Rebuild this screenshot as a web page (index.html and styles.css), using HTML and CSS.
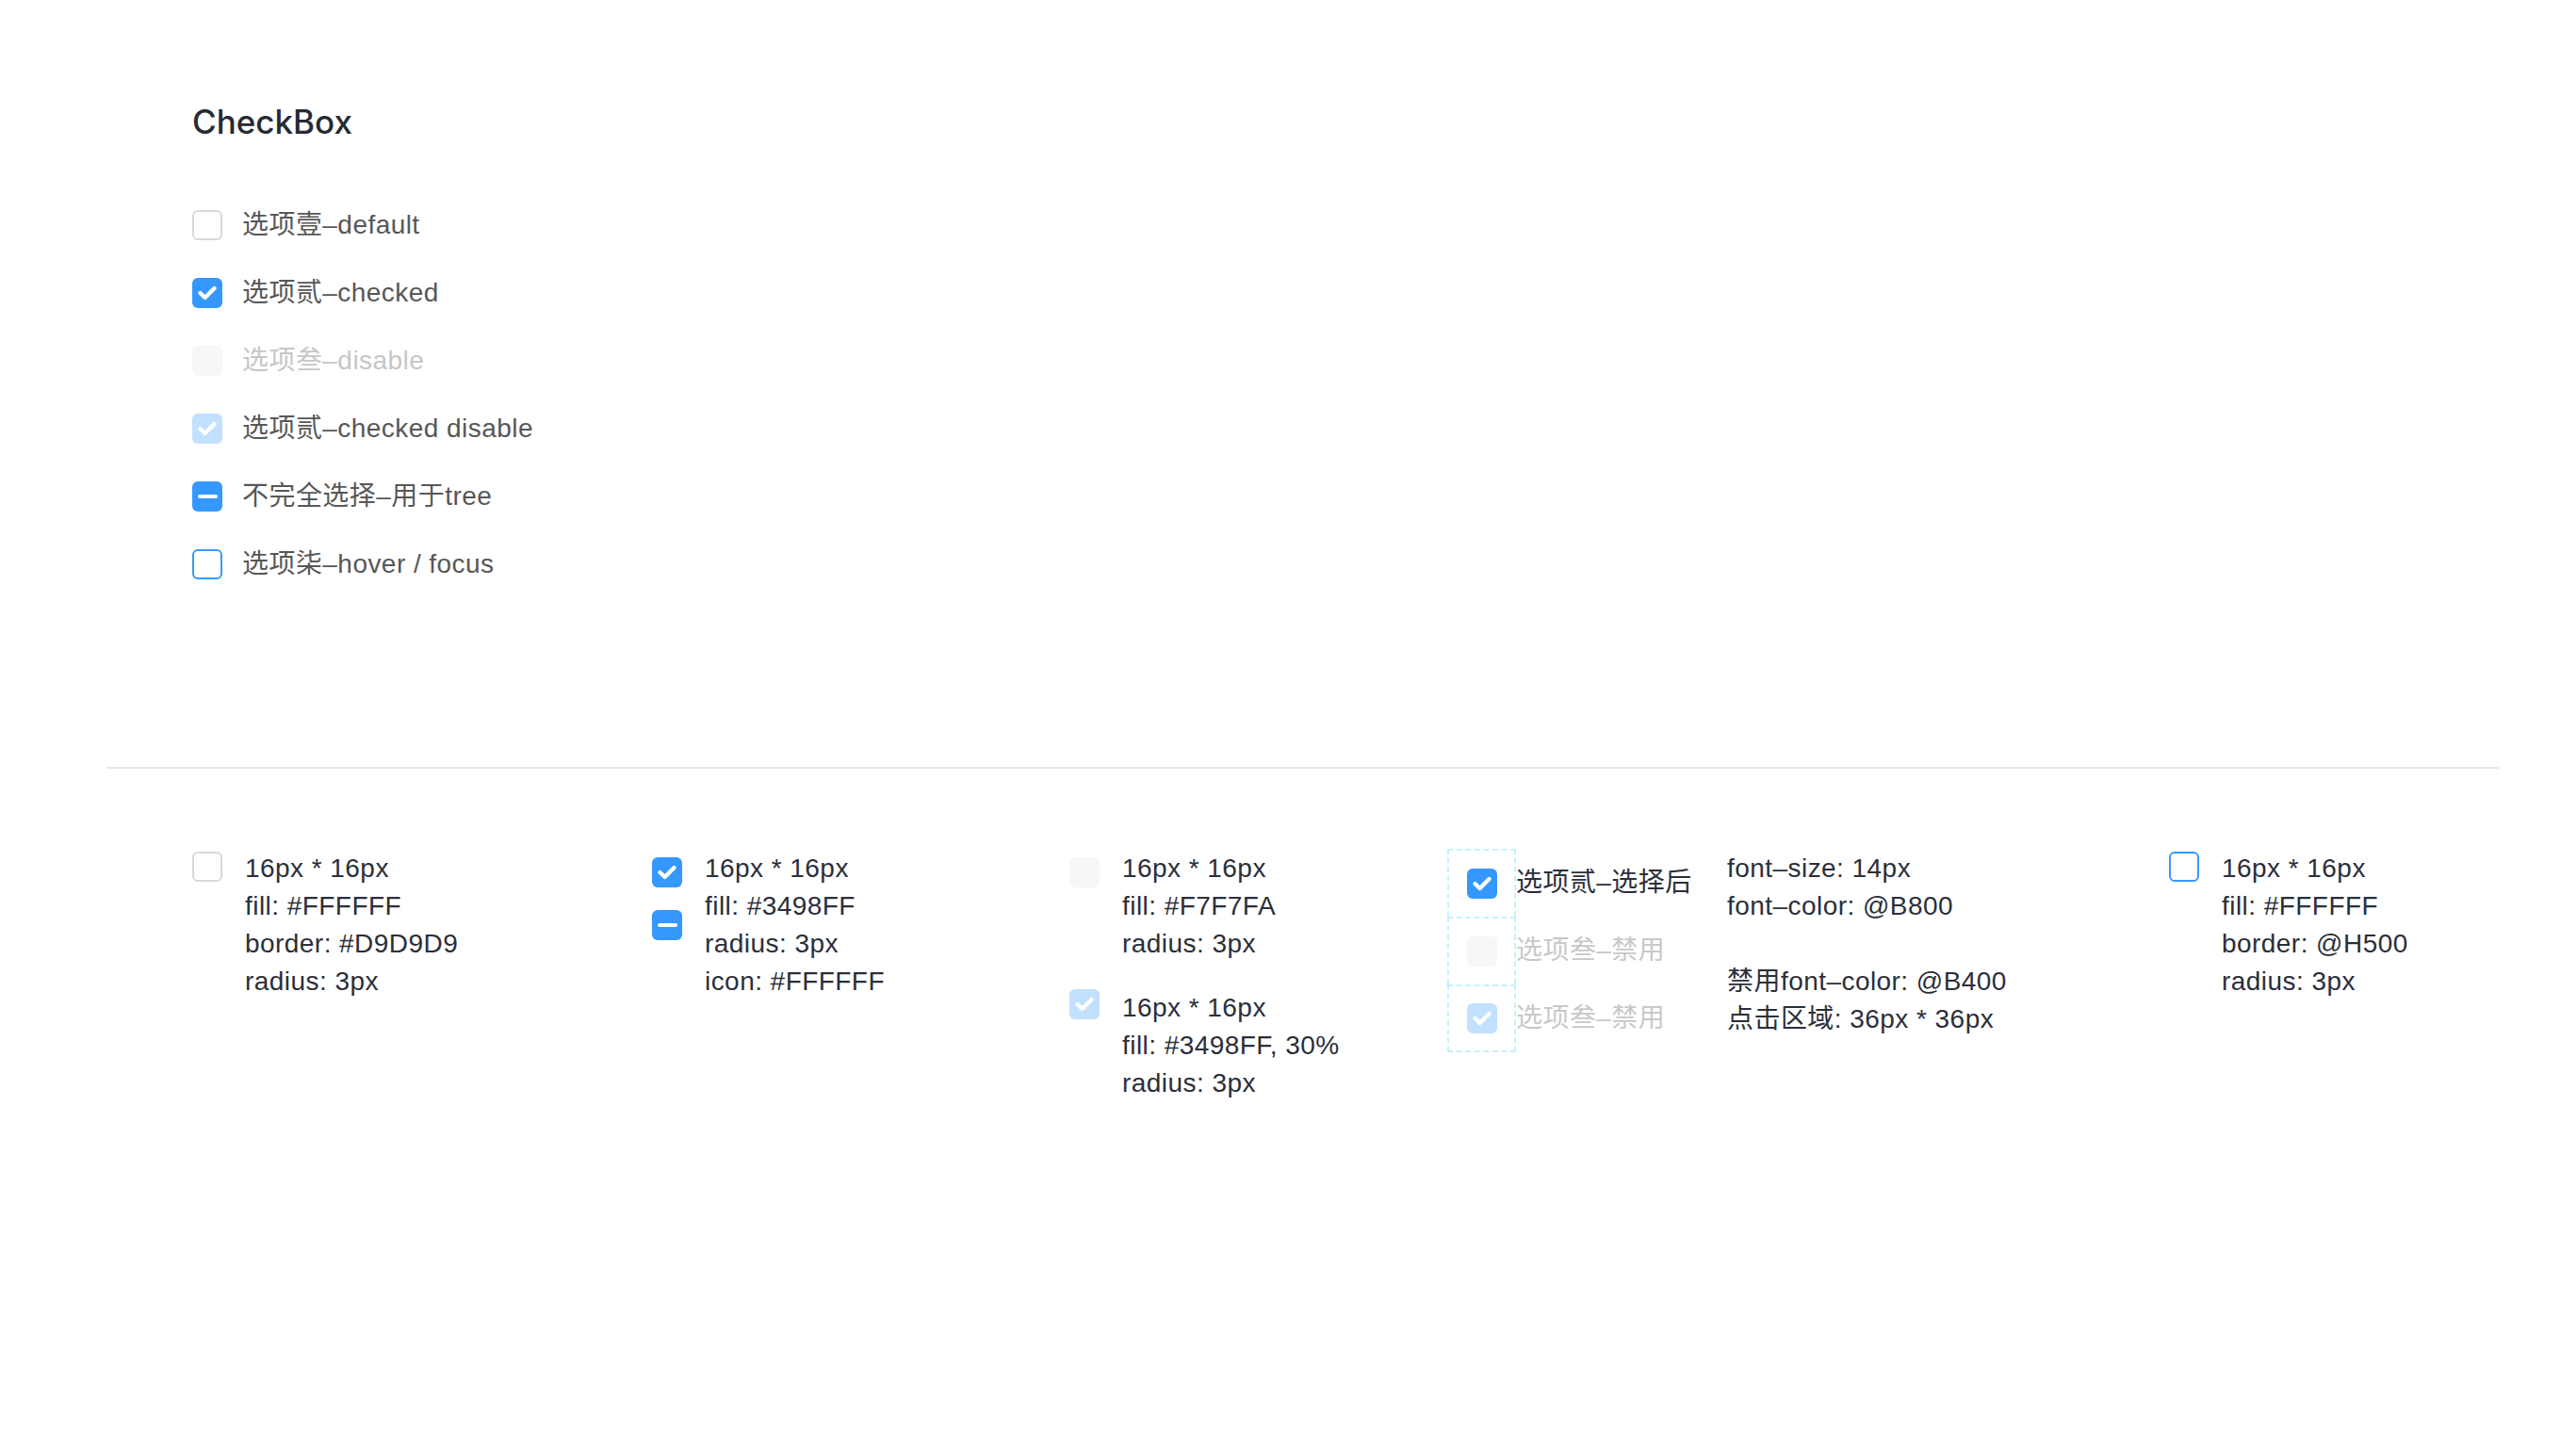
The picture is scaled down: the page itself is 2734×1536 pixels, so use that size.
FILE: index.html
```html
<!DOCTYPE html>
<html lang="zh-CN">
<head>
<meta charset="utf-8">
<title>CheckBox</title>
<link rel="stylesheet" href="styles.css">
</head>
<body>
<div class="page">
  <section class="demo">
    <h1 class="title">CheckBox</h1>
    <ul class="options">
      <li class="option"><span class="cb"></span><span class="label">选项壹–default</span></li>
      <li class="option"><span class="cb cb-checked"><svg viewBox="0 0 32 32"><path d="M8.5 16 L13.6 21 L23.5 11"/></svg></span><span class="label">选项贰–checked</span></li>
      <li class="option"><span class="cb cb-disabled"></span><span class="label label-disabled">选项叁–disable</span></li>
      <li class="option"><span class="cb cb-checked-disabled"><svg viewBox="0 0 32 32"><path d="M8.5 16 L13.6 21 L23.5 11"/></svg></span><span class="label">选项贰–checked disable</span></li>
      <li class="option"><span class="cb cb-checked"><i class="minus"></i></span><span class="label">不完全选择–用于tree</span></li>
      <li class="option"><span class="cb cb-hover"></span><span class="label">选项柒–hover / focus</span></li>
    </ul>
  </section>

  <hr class="divider">

  <section class="specs">
    <div class="spec">
      <div class="boxes boxes-high"><span class="cb"></span></div>
      <div class="spec-text">
        <p>16px * 16px</p>
        <p>fill: #FFFFFF</p>
        <p>border: #D9D9D9</p>
        <p>radius: 3px</p>
      </div>
    </div>

    <div class="spec">
      <div class="boxes boxes-low">
        <span class="cb cb-checked"><svg viewBox="0 0 32 32"><path d="M8.5 16 L13.6 21 L23.5 11"/></svg></span>
        <span class="cb cb-checked"><i class="minus"></i></span>
      </div>
      <div class="spec-text">
        <p>16px * 16px</p>
        <p>fill: #3498FF</p>
        <p>radius: 3px</p>
        <p>icon: #FFFFFF</p>
      </div>
    </div>

    <div class="spec-stack">
      <div class="spec">
        <div class="boxes boxes-low"><span class="cb cb-disabled"></span></div>
        <div class="spec-text">
          <p>16px * 16px</p>
          <p>fill: #F7F7FA</p>
          <p>radius: 3px</p>
        </div>
      </div>
      <div class="spec">
        <div class="boxes"><span class="cb cb-checked-disabled"><svg viewBox="0 0 32 32"><path d="M8.5 16 L13.6 21 L23.5 11"/></svg></span></div>
        <div class="spec-text">
          <p>16px * 16px</p>
          <p>fill: #3498FF, 30%</p>
          <p>radius: 3px</p>
        </div>
      </div>
    </div>

    <div class="hit-demo">
      <div class="hit-row">
        <span class="hit"><span class="cb cb-checked"><svg viewBox="0 0 32 32"><path d="M8.5 16 L13.6 21 L23.5 11"/></svg></span></span>
        <span class="hit-label">选项贰–选择后</span>
      </div>
      <div class="hit-row">
        <span class="hit"><span class="cb cb-disabled"></span></span>
        <span class="hit-label hit-label-disabled">选项叁–禁用</span>
      </div>
      <div class="hit-row">
        <span class="hit hit-last"><span class="cb cb-checked-disabled"><svg viewBox="0 0 32 32"><path d="M8.5 16 L13.6 21 L23.5 11"/></svg></span></span>
        <span class="hit-label hit-label-disabled">选项叁–禁用</span>
      </div>
    </div>

    <div class="spec-text spec-font">
      <p>font–size: 14px</p>
      <p>font–color: @B800</p>
      <p class="blank">&nbsp;</p>
      <p>禁用font–color: @B400</p>
      <p>点击区域: 36px * 36px</p>
    </div>

    <div class="spec">
      <div class="boxes boxes-high"><span class="cb cb-hover"></span></div>
      <div class="spec-text">
        <p>16px * 16px</p>
        <p>fill: #FFFFFF</p>
        <p>border: @H500</p>
        <p>radius: 3px</p>
      </div>
    </div>
  </section>
</div>
</body>
</html>
```

FILE: styles.css
```css
* {
  box-sizing: border-box;
}

html, body {
  margin: 0;
  padding: 0;
  background: #ffffff;
}

body {
  font-family: "Liberation Sans", "Noto Sans CJK SC", sans-serif;
  color: #2b2f3a;
}

.page {
  width: 2734px;
  min-height: 1536px;
}

/* ---------- top demo ---------- */
.demo {
  padding: 104px 0 0 204px;
}

.title {
  margin: 0;
  font-family: Inter, "Liberation Sans", sans-serif;
  font-size: 35px;
  line-height: 50px;
  font-weight: 500;
  color: #262a33;
  letter-spacing: 0;
}

.options {
  list-style: none;
  margin: 49px 0 0;
  padding: 0;
}

.option {
  height: 72px;
  display: flex;
  align-items: center;
  gap: 21px;
}

.label {
  font-size: 28px;
  line-height: 40px;
  letter-spacing: 0.45px;
  color: #575757;
}

.label-disabled {
  color: #c6c6c6;
}

/* ---------- checkbox ---------- */
.cb {
  width: 32px;
  height: 32px;
  flex: 0 0 32px;
  border-radius: 6px;
  border: 2px solid #d9d9d9;
  background: #ffffff;
  display: flex;
  align-items: center;
  justify-content: center;
}

.cb svg {
  width: 32px;
  height: 32px;
  display: block;
}

.cb svg path {
  fill: none;
  stroke: #ffffff;
  stroke-width: 4.4;
  stroke-linecap: round;
  stroke-linejoin: round;
}

.cb-checked {
  border: none;
  background: #3498ff;
}

.cb-disabled {
  border: none;
  background: #f7f7fa;
}

.cb-checked-disabled {
  border: none;
  background: #c2e0ff;
}

.cb-hover {
  border-color: #3498ff;
}

.minus {
  display: block;
  width: 21px;
  height: 4px;
  border-radius: 2px;
  background: #ffffff;
}

/* ---------- divider ---------- */
.divider {
  margin: 179px 82px 0 113px;
  border: none;
  height: 2px;
  background: #e5e5ea;
}

/* ---------- specs ---------- */
.specs {
  display: grid;
  grid-template-columns: 488px 443px 401px 297px 469px 1fr;
  align-items: start;
  padding: 86px 0 0 204px;
}

.spec {
  display: flex;
  align-items: flex-start;
  gap: 24px;
}

.boxes {
  display: flex;
  flex-direction: column;
  gap: 24px;
}

.boxes-high {
  padding-top: 2px;
}

.boxes-low {
  padding-top: 8px;
}

.spec-text p {
  margin: 0;
  font-size: 28px;
  line-height: 40px;
  letter-spacing: 0.45px;
  color: #2b2f3a;
  white-space: nowrap;
}

.spec-stack {
  display: flex;
  flex-direction: column;
  gap: 28px;
}

.hit-demo {
  display: flex;
  flex-direction: column;
  margin-top: -1px;
}

.hit-row {
  display: flex;
  align-items: center;
}

.hit {
  width: 73px;
  height: 72px;
  display: flex;
  align-items: center;
  justify-content: center;
  border-left: 2px dashed #c5f1ff;
  border-right: 2px dashed #c5f1ff;
  border-top: 2px dashed #c5f1ff;
}

.hit-last {
  border-bottom: 2px dashed #c5f1ff;
}

.hit-label {
  font-size: 28px;
  line-height: 40px;
  letter-spacing: 0.45px;
  color: #2b2f3a;
  white-space: nowrap;
}

.hit-label-disabled {
  color: #c8c8c8;
}
```
